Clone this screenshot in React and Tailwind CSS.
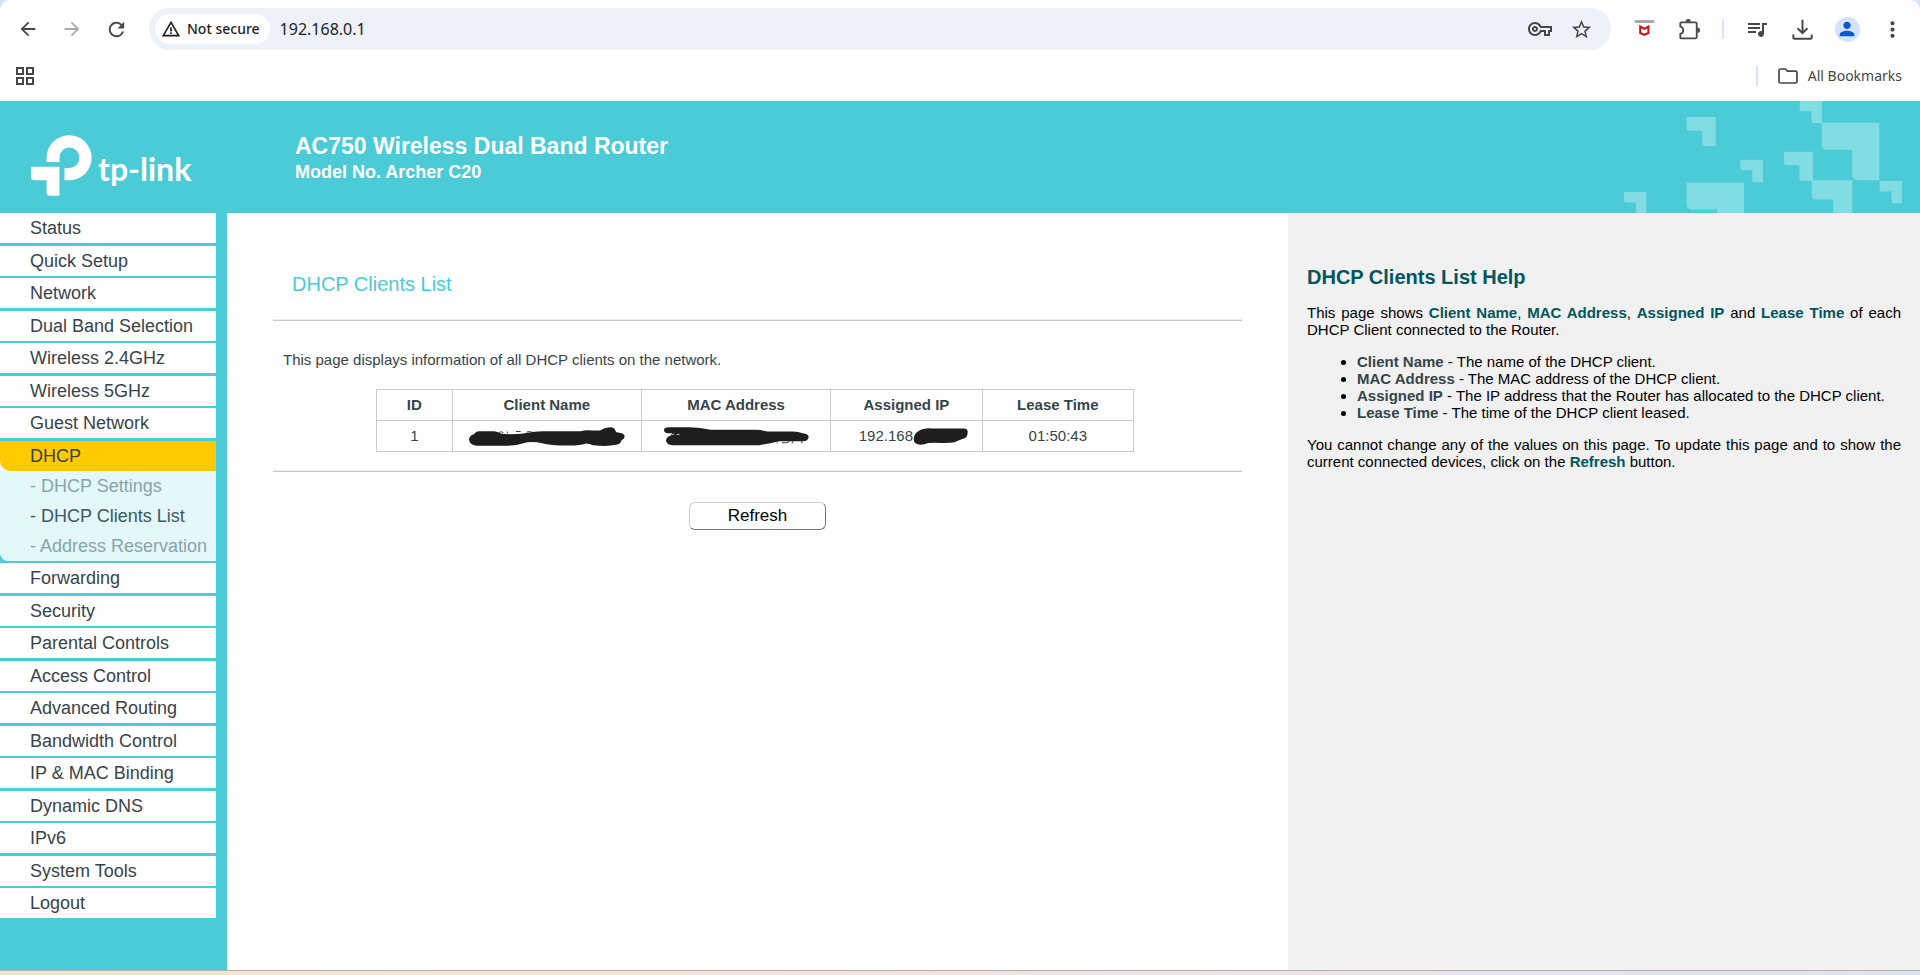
import React from "react";
import {
  MdArrowBack,
  MdArrowForward,
  MdRefresh,
  MdWarningAmber,
  MdOutlineVpnKey,
  MdStarBorder,
  MdQueueMusic,
  MdPerson,
  MdMoreVert,
} from "react-icons/md";

const beforeDhcp = [
  "Status",
  "Quick Setup",
  "Network",
  "Dual Band Selection",
  "Wireless 2.4GHz",
  "Wireless 5GHz",
  "Guest Network",
];

const afterDhcp = [
  "Forwarding",
  "Security",
  "Parental Controls",
  "Access Control",
  "Advanced Routing",
  "Bandwidth Control",
  "IP & MAC Binding",
  "Dynamic DNS",
  "IPv6",
  "System Tools",
  "Logout",
];

const dhcpPages = [
  { label: "DHCP Settings" },
  { label: "DHCP Clients List", current: true },
  { label: "Address Reservation" },
];

const helpTerms = [
  ["Client Name", "The name of the DHCP client."],
  ["MAC Address", "The MAC address of the DHCP client."],
  ["Assigned IP", "The IP address that the Router has allocated to the DHCP client."],
  ["Lease Time", "The time of the DHCP client leased."],
];

// Corner pieces of the header pattern: x, y, size
const corners = [
  [132, 291, 67],
  [320, 66, 87],
  [320, 263, 172],
  [481, 194, 68],
  [612, 170, 87],
  [659, 17, 67],
  [725, 83, 173],
  [695, 256, 122],
  [899, 258, 67],
];

function cornerPath([x, y, s]) {
  const t = s * 0.47;
  const r = s * 0.1;
  return `M${x} ${y}h${s}v${s}h${r - t}q${-r} 0 ${-r} ${-r}v${r + t - s}H${x + r}q${-r} 0 ${-r} ${-r}Z`;
}

function IconButton({ label, children }) {
  return (
    <button
      type="button"
      aria-label={label}
      className="flex h-9 w-9 shrink-0 items-center justify-center rounded-full text-[#474747]"
    >
      {children}
    </button>
  );
}

function ShieldIcon() {
  return (
    <svg viewBox="405 54 64 64" className="h-[21px] w-[21px]" fill="none" aria-hidden="true">
      <rect x="407" y="57" width="60" height="9" rx="3" fill="#b0a6a6" />
      <path d="M424 77l12.500 7 12.500-7v20l-12.500 5-12.500-5z" stroke="#c11a1f" strokeWidth="6.500" />
    </svg>
  );
}

function PuzzleIcon() {
  return (
    <svg viewBox="543 54 64 64" className="h-[21px] w-[21px]" fill="none" aria-hidden="true">
      <path
        d="M550 64h43q4 0 4 4v41q0 4-4 4h-43q-3 0-3-3v-11c12-2 12-20 0-22v-10q0-3 3-3z"
        stroke="#474747"
        strokeWidth="5.500"
      />
      <path d="M563 62a8 8 0 0 1 16 0zM599 80a8 8 0 0 1 0 16z" fill="#474747" />
    </svg>
  );
}

function DownloadIcon() {
  return (
    <svg viewBox="877 54 62 64" className="h-[21px] w-[21px]" fill="none" stroke="#474747" strokeWidth="6" aria-hidden="true">
      <path d="M908 56v40M893 82l15 15 15-15M880 101v10q0 3 3 3h50q3 0 3-3v-10" />
    </svg>
  );
}

function BrowserBar() {
  return (
    <header className="bg-[#d3e3fd] font-['Noto_Sans',sans-serif]">
      <div className="rounded-t-[10px] bg-white">
        <div className="flex items-center gap-[9px] px-[10px] pt-2">
          <nav aria-label="History" className="flex gap-2">
            <IconButton label="Back">
              <MdArrowBack size={22} />
            </IconButton>
            <button
              type="button"
              aria-label="Forward"
              disabled
              className="flex h-9 w-9 items-center justify-center text-[#ababab]"
            >
              <MdArrowForward size={22} />
            </button>
            <IconButton label="Reload">
              <MdRefresh size={23} />
            </IconButton>
          </nav>
          <div className="mx-1.5 flex h-[42px] flex-1 items-center rounded-full bg-[#ecf1fa] pr-[18px] pl-1.5">
            <button
              type="button"
              className="flex h-[30px] items-center gap-1.5 rounded-full bg-white pr-[10px] pl-1.5 text-sm font-medium text-[#1f1f1f]"
            >
              <MdWarningAmber size={20} />
              Not secure
            </button>
            <input
              type="text"
              aria-label="Address"
              defaultValue="192.168.0.1"
              className="ml-[10px] min-w-0 flex-1 bg-transparent text-base text-[#1f1f1f] outline-none"
            />
            <div className="flex items-center gap-[18px] text-[#474747]">
              <button type="button" aria-label="Passwords">
                <MdOutlineVpnKey size={24} />
              </button>
              <button type="button" aria-label="Bookmark this page">
                <MdStarBorder size={23} />
              </button>
            </div>
          </div>
          <IconButton label="Web protection">
            <ShieldIcon />
          </IconButton>
          <IconButton label="Extensions">
            <PuzzleIcon />
          </IconButton>
          <span className="mx-1.5 h-5 w-0.5 rounded-full bg-[#d3e3fd]" />
          <IconButton label="Media">
            <MdQueueMusic size={24} />
          </IconButton>
          <IconButton label="Downloads">
            <DownloadIcon />
          </IconButton>
          <IconButton label="Profile">
            <span className="flex h-[25px] w-[25px] items-center justify-center rounded-full bg-[#d3e3fd] text-[#0b57d0]">
              <MdPerson size={22} />
            </span>
          </IconButton>
          <IconButton label="Menu">
            <MdMoreVert size={25} />
          </IconButton>
        </div>
        <div className="flex h-[51px] items-center justify-between pr-[18px] pl-4">
          <button type="button" aria-label="Apps">
            <svg viewBox="0 0 18 18" className="h-[18px] w-[18px]" fill="none" stroke="#474747" strokeWidth="2" aria-hidden="true">
              <path d="M1 1h6v6H1zM11 1h6v6h-6zM1 11h6v6H1zM11 11h6v6h-6z" />
            </svg>
          </button>
          <div className="flex items-center gap-5">
            <span className="h-5 w-0.5 rounded-full bg-[#d3e3fd]" />
            <button type="button" className="flex items-center gap-[10px] text-sm text-[#474747]">
              <svg viewBox="0 0 20 16" className="h-4 w-5" fill="none" stroke="#474747" strokeWidth="1.700" aria-hidden="true">
                <path d="M2.500 1H7.500L9.500 3.200H17.500Q19 3.200 19 4.700V13.500Q19 15 17.500 15H2.500Q1 15 1 13.500V2.500Q1 1 2.500 1Z" />
              </svg>
              All Bookmarks
            </button>
          </div>
        </div>
      </div>
    </header>
  );
}

function RouterHeader() {
  return (
    <div className="flex h-28 items-start bg-[#4acbd6] text-white">
      <a href="#home" className="flex w-[295px] shrink-0 items-start gap-1.5 pt-[34px] pl-[31px]">
        <svg viewBox="33 30 184 183" className="h-[61px] w-[61px]" fill="currentColor" aria-hidden="true">
          <path d="M80 111V98A68 68 0 1 1 149 166H134V129H149A30 31 0 1 0 119 98V111Z" />
          <path d="M33 125H119V213H90Q80 213 80 203V166H43Q33 166 33 156Z" />
        </svg>
        <span className="pt-[14px] font-['Lato',sans-serif] text-[32px] leading-10 font-bold">tp-link</span>
      </a>
      <div className="pt-8">
        <h1 className="text-[23px] leading-[26px] font-bold">AC750 Wireless Dual Band Router</h1>
        <p className="text-[18px] leading-[26px] font-bold">Model No. Archer C20</p>
      </div>
      <svg viewBox="0 18 1020 336" className="ml-auto h-28 w-[340px]" fill="#82dce3" aria-hidden="true">
        {corners.map((c) => (
          <path key={c.join("-")} d={cornerPath(c)} />
        ))}
      </svg>
    </div>
  );
}

function MenuLink({ label }) {
  return (
    <a href={"#" + label} className="block bg-white pl-[30px] text-lg leading-[30px]">
      {label}
    </a>
  );
}

function Sidebar() {
  return (
    <nav aria-label="Main" className="bg-[#4acbd6] pr-[11px] pb-8 text-[#36444b]">
      <ul>
        {beforeDhcp.map((label) => (
          <li key={label} className="odd:mb-[3px] even:mb-0.5">
            <MenuLink label={label} />
          </li>
        ))}
        <li className="mb-0.5">
          <div className="bg-white">
            <a href="#DHCP" className="block rounded-bl-[10px] bg-[#ffcb00] pl-[30px] text-lg leading-[30px]">
              DHCP
            </a>
          </div>
          <ul className="rounded-bl-lg bg-[#e4f7f9]">
            {dhcpPages.map((page) => (
              <li key={page.label}>
                <a
                  href={"#" + page.label}
                  className={
                    page.current
                      ? "block pl-[30px] text-lg leading-[30px] whitespace-nowrap text-[#3c5a62]"
                      : "block pl-[30px] text-lg leading-[30px] whitespace-nowrap text-[#88a5aa]"
                  }
                >
                  - {page.label}
                </a>
              </li>
            ))}
          </ul>
        </li>
        {afterDhcp.map((label) => (
          <li key={label} className="odd:mb-[3px] even:mb-0.5 last:mb-0">
            <MenuLink label={label} />
          </li>
        ))}
      </ul>
    </nav>
  );
}

function NameScribble() {
  return (
    <svg viewBox="27 30 468 62" className="mx-auto h-[21px] w-[156px]" fill="#1e1e1e" role="img" aria-label="Hidden">
      <path d="M27 70Q28 58 42 54Q48 44 60 45H102Q114 46 122 52Q150 56 190 52Q215 46 250 45H362Q376 40 400 43H420Q432 34 450 33Q466 34 466 44Q468 50 478 50Q494 52 494 62Q492 70 484 73Q482 84 468 86Q440 92 400 87Q386 82 378 82Q360 88 330 88H300Q270 87 250 82Q228 77 202 78Q170 88 140 89H50Q28 86 27 70Z" />
      <path d="M116 49q8-4 14 0M142 46v5M168 46h14M200 48q8-4 16 0" fill="none" stroke="#36444b" strokeWidth="3" />
    </svg>
  );
}

function MacScribble() {
  return (
    <svg viewBox="615 27 434 62" className="mx-auto h-[21px] w-[145px]" fill="#1e1e1e" role="img" aria-label="Hidden">
      <path d="M615 38Q616 30 628 30H690Q725 30 755 38H890Q910 39 925 43H1000Q1018 43 1030 48Q1048 50 1048 60Q1046 72 1030 72H960Q935 78 900 84H640Q622 82 621 70Q622 60 634 56L640 48H626Q615 48 615 38Z" />
      <path d="M954 75v3M968 77h14q6 0 8-5M998 78l3-6M1026 72l3 6" fill="none" stroke="#36444b" strokeWidth="3" />
      <path d="M638 54l8-4M652 53q5-4 10 0" fill="none" stroke="#ffffff" strokeWidth="2" />
    </svg>
  );
}

function IpScribble() {
  return (
    <svg viewBox="1359 30 166 57" className="-mr-[14px] h-[19px] w-[55px] shrink-0" fill="#1e1e1e" role="img" aria-label="Hidden">
      <path d="M1361 66Q1362 50 1376 42Q1390 33 1412 34H1512Q1524 34 1524 44Q1524 60 1516 63Q1500 68 1484 76Q1470 79 1440 78Q1408 76 1394 82Q1362 88 1361 66Z" />
    </svg>
  );
}

function ClientsTable() {
  const cell = "h-[31px] border border-[#cbcbcb] p-0 text-center";
  return (
    <div className="mt-5 pr-[5px]">
      <table className="mx-auto w-[758px] max-w-full table-fixed border-collapse">
        <colgroup>
          <col className="w-[10%]" />
          <col className="w-[25%]" />
          <col className="w-[25%]" />
          <col className="w-[20%]" />
          <col className="w-[20%]" />
        </colgroup>
        <thead>
          <tr>
            {["ID", "Client Name", "MAC Address", "Assigned IP", "Lease Time"].map((name) => (
              <th key={name} scope="col" className={cell}>
                {name}
              </th>
            ))}
          </tr>
        </thead>
        <tbody>
          <tr>
            <td className={cell}>1</td>
            <td className={cell}>
              <NameScribble />
            </td>
            <td className={cell}>
              <MacScribble />
            </td>
            <td className={cell}>
              <span className="flex items-center justify-center">
                192.168
                <IpScribble />
              </span>
            </td>
            <td className={cell}>01:50:43</td>
          </tr>
        </tbody>
      </table>
    </div>
  );
}

function Rule() {
  return <hr className="h-0.5 border-0 border-t border-b border-t-[#ececec] border-b-[#cbcbcb]" />;
}

function Help() {
  const term = "font-bold text-[#005661]";
  return (
    <aside className="bg-[#f1f1f1] px-[19px] pt-[52px] text-justify text-[15px] leading-[17px] text-black">
      <h2 className="text-[20px] leading-6 font-bold text-[#005661]">DHCP Clients List Help</h2>
      <p className="mt-[15px]">
        This page shows <b className={term}>Client Name</b>, <b className={term}>MAC Address</b>,{" "}
        <b className={term}>Assigned IP</b> and <b className={term}>Lease Time</b> of each DHCP Client connected to
        the Router.
      </p>
      <ul className="mt-[15px] list-disc pl-[50px]">
        {helpTerms.map(([name, text]) => (
          <li key={name}>
            <b className="font-bold text-[#36444b]">{name}</b> - {text}
          </li>
        ))}
      </ul>
      <p className="mt-[15px]">
        You cannot change any of the values on this page. To update this page and to show the current connected
        devices, click on the <b className={term}>Refresh</b> button.
      </p>
    </aside>
  );
}

export default function App() {
  return (
    <div className="flex min-h-screen flex-col bg-white font-['Liberation_Sans',Arial,sans-serif]">
      <BrowserBar />
      <RouterHeader />
      <div className="grid flex-1 grid-cols-[227px_1061fr_632fr]">
        <Sidebar />
        <main className="px-[46px] pt-[59px] text-[15px] leading-[18px] text-[#36444b]">
          <h2 className="mb-[23px] pl-[19px] text-[20px] leading-6 text-[#4acbd6]">DHCP Clients List</h2>
          <Rule />
          <p className="mt-[30px] pl-[10px]">This page displays information of all DHCP clients on the network.</p>
          <ClientsTable />
          <div className="mt-[18px]">
            <Rule />
          </div>
          <div className="mt-[30px] flex justify-center">
            <button
              type="button"
              className="h-7 w-[137px] rounded-md border border-t-[#cbcbcb] border-r-[#767676] border-b-[#767676] border-l-[#cbcbcb] bg-white text-[17px] text-black"
            >
              Refresh
            </button>
          </div>
        </main>
        <Help />
      </div>
      <div className="h-[5px] shrink-0 border-t border-[#b5b0ae] bg-linear-to-r from-[#f3e6c8] via-[#f3e3de] to-[#dbe4f3]" />
    </div>
  );
}
